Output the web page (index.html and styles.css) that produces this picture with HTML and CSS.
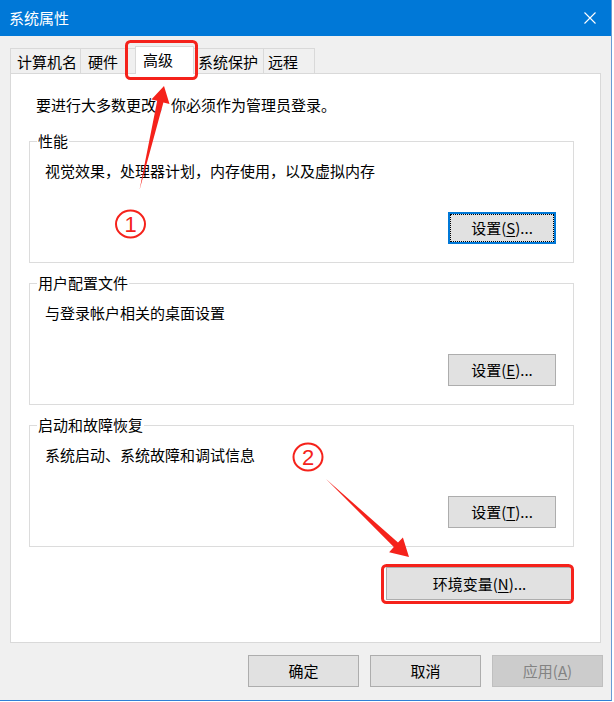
FILE: index.html
```html
<!DOCTYPE html>
<html lang="zh-CN">
<head>
<meta charset="utf-8">
<title>系统属性</title>
<link rel="stylesheet" href="styles.css">
</head>
<body>
<div class="window">
  <div class="titlebar">
    <span class="title">系统属性</span>
    <svg class="close" width="12" height="12" viewBox="0 0 12 12"><path d="M0.5 0.5 L11.5 11.5 M11.5 0.5 L0.5 11.5" stroke="#fff" stroke-width="1.1" fill="none"/></svg>
  </div>
  <div class="content">
    <div class="tabs">
      <div class="tab t1">计算机名</div>
      <div class="tab t2">硬件</div>
      <div class="tab t3 active">高级</div>
      <div class="tab t4">系统保护</div>
      <div class="tab t5">远程</div>
    </div>
    <div class="panel">
      <p class="note">要进行大多数更改，你必须作为管理员登录。</p>
      <fieldset class="group">
        <legend>性能</legend>
        <div class="group-body">
          <p class="desc">视觉效果，处理器计划，内存使用，以及虚拟内存</p>
          <div class="btn-row"><button class="btn btn-set focus">设置(<u>S</u>)...</button></div>
        </div>
      </fieldset>
      <fieldset class="group">
        <legend>用户配置文件</legend>
        <div class="group-body">
          <p class="desc">与登录帐户相关的桌面设置</p>
          <div class="btn-row"><button class="btn btn-set">设置(<u>E</u>)...</button></div>
        </div>
      </fieldset>
      <fieldset class="group">
        <legend>启动和故障恢复</legend>
        <div class="group-body">
          <p class="desc">系统启动、系统故障和调试信息</p>
          <div class="btn-row"><button class="btn btn-set">设置(<u>T</u>)...</button></div>
        </div>
      </fieldset>
      <div class="env-row"><button class="btn btn-env">环境变量(<u>N</u>)...</button></div>
    </div>
    <div class="footer">
      <button class="btn btn-foot">确定</button>
      <button class="btn btn-foot">取消</button>
      <button class="btn btn-foot btn-disabled">应用(<u>A</u>)</button>
    </div>
  </div>
  <svg class="annot" width="614" height="702" viewBox="0 0 614 702">
    <rect x="126.5" y="41.5" width="70" height="37" rx="4" fill="none" stroke="#f5221b" stroke-width="3"/>
    <polygon points="164,86 169.5,104 163.4,102.4 139.5,190 157.2,100.8 151.4,99.6" fill="#f5221b"/>
    <ellipse cx="130.5" cy="224" rx="14.5" ry="13.5" fill="none" stroke="#f5221b" stroke-width="2"/>
    <text class="num" x="130.5" y="232" text-anchor="middle">1</text>
    <ellipse cx="308" cy="457" rx="14.5" ry="13.5" fill="none" stroke="#f5221b" stroke-width="2"/>
    <text class="num" x="308" y="465" text-anchor="middle">2</text>
    <polygon points="409,557 389.1,552.2 393.8,546.9 326,479 398,542.5 402.9,537.4" fill="#f5221b"/>
    <rect x="382.5" y="565.5" width="190" height="37" rx="4" fill="none" stroke="#f5221b" stroke-width="3"/>
  </svg>
</div>
</body>
</html>
```
FILE: styles.css
```css
* { box-sizing: border-box; }
html, body { margin: 0; padding: 0; }
body {
  width: 614px;
  height: 702px;
  overflow: hidden;
  background: #ffffff;
  font-family: "Noto Sans CJK SC", "Noto Sans", sans-serif;
  font-size: 15px;
  color: #000;
}
.window {
  position: relative;
  width: 612px;
  height: 701px;
  background: #f0f0f0;
  border-right: 1px solid #6a9bd4;
  border-bottom: 1px solid #2f80d6;
}
.titlebar {
  height: 36px;
  background: #0078d7;
  color: #fff;
  display: flex;
  align-items: center;
  justify-content: space-between;
  padding: 0 15px 0 9px;
}
.title { font-size: 15px; line-height: 20px; }
.close { display: block; }
.content { padding: 10px 0 0 10px; }
.tabs {
  display: flex;
  align-items: flex-end;
  height: 27px;
}
.tab {
  height: 25px;
  border: 1px solid #d9d9d9;
  border-bottom: none;
  margin-left: -1px;
  padding-top: 3px;
  line-height: 20px;
  background: #f0f0f0;
  white-space: nowrap;
}
.tab.t1 { margin-left: 0; width: 71px; padding-left: 6px; }
.tab.t2 { width: 56px; padding-left: 7px; }
.tab.t3 { width: 59px; padding-left: 7px; }
.tab.t4 { width: 71px; padding-left: 4px; }
.tab.t5 { width: 52px; padding-left: 4px; }
.tab.active {
  height: 28px;
  margin-bottom: -1px;
  background: #fff;
  position: relative;
  z-index: 1;
}
.panel {
  width: 591px;
  height: 570px;
  background: #fff;
  border: 1px solid #d9d9d9;
  padding-top: 21px;
}
.note { margin: 0 0 0 25px; line-height: 20px; }
.group {
  margin: 16px 0 0 18px;
  width: 545px;
  min-width: 0;
  padding: 0;
  border: 1px solid #dcdcdc;
}
.group + .group { margin-top: 10px; }
.group legend {
  padding: 0 1px;
  margin-left: 7px;
  line-height: 20px;
  font-size: 15px;
}
.group-body { padding: 10px 17px 18px 15px; }
.desc { margin: 0; line-height: 20px; }
.btn-row {
  display: flex;
  justify-content: flex-end;
  margin-top: 31px;
}
.btn {
  font-family: inherit;
  font-size: 15px;
  line-height: 20px;
  color: #000;
  background: #e1e1e1;
  border: 1px solid #adadad;
  border-radius: 0;
  padding: 0;
  height: 32px;
}
.btn u { text-underline-offset: 2px; }
.btn-set { width: 108px; }
.btn.focus {
  border: 2px solid #0078d7;
  outline: 1px dotted #000;
  outline-offset: -3px;
}
.env-row {
  display: flex;
  justify-content: flex-end;
  margin: 20px 27px 0 0;
}
.btn-env { width: 187px; height: 33px; }
.footer {
  display: flex;
  gap: 11px;
  padding-left: 238px;
  margin-top: 12px;
}
.btn-foot { width: 111px; }
.btn-disabled {
  background: #cccccc;
  border-color: #bfbfbf;
  color: #838383;
}
.annot {
  position: absolute;
  left: 0;
  top: 0;
  pointer-events: none;
}
.num {
  font-family: "Liberation Sans", sans-serif;
  font-size: 22px;
  font-weight: 400;
  fill: #f5221b;
}
```
